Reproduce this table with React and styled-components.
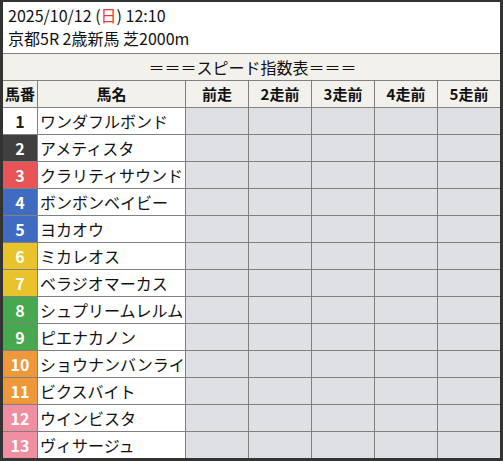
import React from 'react';
import styled, { createGlobalStyle } from 'styled-components';

const GlobalStyle = createGlobalStyle`
  html, body {
    margin: 0;
    padding: 0;
    background: #fff;
  }
  * {
    box-sizing: border-box;
  }
`;

const Frame = styled.div`
  width: 503px;
  height: 461px;
  border-style: solid;
  border-color: #333;
  border-width: 2px 3px 3px 3px;
  background: #fff;
  font-family: 'Noto Sans CJK JP', 'Noto Sans', sans-serif;
  color: #111;
  overflow: hidden;
`;

const RaceInfo = styled.div`
  height: 52px;
  padding: 2px 0 0 5px;
  border-bottom: 1px solid #808080;
  font-size: 16px;
  line-height: 23px;
`;

const Sunday = styled.span`
  color: #e83a3a;
`;

const Title = styled.div`
  height: 27px;
  border-bottom: 1px solid #808080;
  background: #f2f1ec;
  text-align: center;
  font-size: 16px;
  line-height: 26px;
  padding-left: 2px;
`;

const Row = styled.div`
  display: grid;
  grid-template-columns: 35px 148px repeat(4, 63px) 1fr;
  height: 27px;
  border-bottom: ${(p) => (p.$last ? 'none' : '1px solid #808080')};
`;

const Cell = styled.div`
  border-right: 1px solid #808080;
  &:last-child {
    border-right: none;
  }
`;

const HeadCell = styled(Cell)`
  background: #f2f1ec;
  font-weight: 700;
  font-size: 15px;
  line-height: 26px;
  text-align: center;
`;

const waku = {
  1: ['#ffffff', '#222'],
  2: ['#404040', '#fff'],
  3: ['#e85556', '#fff'],
  4: ['#3f6bc0', '#fff'],
  5: ['#3f6bc0', '#fff'],
  6: ['#e9c22c', '#fff'],
  7: ['#e9c22c', '#fff'],
  8: ['#46a950', '#fff'],
  9: ['#46a950', '#fff'],
  10: ['#ef973b', '#fff'],
  11: ['#ef973b', '#fff'],
  12: ['#f08fa1', '#fff'],
  13: ['#f08fa1', '#fff'],
};

const NumCell = styled(Cell)`
  background: ${(p) => waku[p.$n][0]};
  color: ${(p) => waku[p.$n][1]};
  font-weight: 700;
  font-size: 16px;
  line-height: 26px;
  text-align: center;
`;

const NameCell = styled(Cell)`
  font-size: 16px;
  line-height: 26px;
  padding-left: 2px;
  white-space: nowrap;
  overflow: hidden;
`;

const ScoreCell = styled(Cell)`
  background: #dfe0e4;
`;

const horses = [
  'ワンダフルボンド',
  'アメティスタ',
  'クラリティサウンド',
  'ボンボンベイビー',
  'ヨカオウ',
  'ミカレオス',
  'ベラジオマーカス',
  'シュプリームレルム',
  'ピエナカノン',
  'ショウナンバンライ',
  'ビクスバイト',
  'ウインビスタ',
  'ヴィサージュ',
];

const columns = ['馬番', '馬名', '前走', '2走前', '3走前', '4走前', '5走前'];

export default function App() {
  return (
    <>
      <GlobalStyle />
      <Frame>
        <RaceInfo>
          <div>
            2025/10/12 (<Sunday>日</Sunday>) 12:10
          </div>
          <div>京都5R 2歳新馬 芝2000m</div>
        </RaceInfo>
        <Title>＝＝＝スピード指数表＝＝＝</Title>
        <Row>
          {columns.map((c) => (
            <HeadCell key={c}>{c}</HeadCell>
          ))}
        </Row>
        {horses.map((name, i) => (
          <Row key={name} $last={i === horses.length - 1}>
            <NumCell $n={i + 1}>{i + 1}</NumCell>
            <NameCell>{name}</NameCell>
            {[0, 1, 2, 3, 4].map((k) => (
              <ScoreCell key={k} />
            ))}
          </Row>
        ))}
      </Frame>
    </>
  );
}
